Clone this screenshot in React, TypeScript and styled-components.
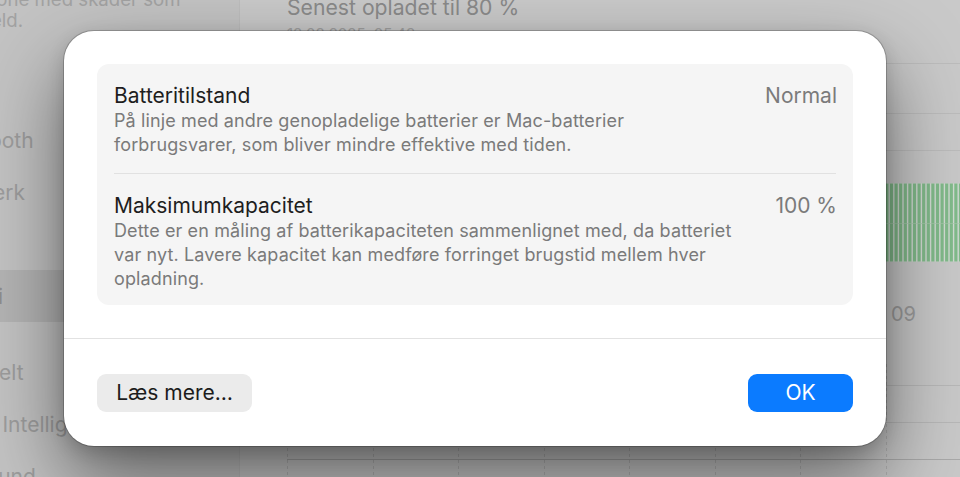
import React from "react";
import styled, { createGlobalStyle } from "styled-components";

const Global = createGlobalStyle`
  html, body { margin: 0; padding: 0; }
  body {
    width: 960px;
    height: 477px;
    overflow: hidden;
    font-family: Inter, "Noto Sans", sans-serif;
    -webkit-font-smoothing: antialiased;
  }
`;

const Screen = styled.div`
  position: relative;
  width: 960px;
  height: 477px;
  overflow: hidden;
  display: grid;
  grid-template-columns: 240px 1fr;
  background: #c9c9c9;
`;

/* ---------- sidebar (dimmed, behind sheet) ---------- */

const Sidebar = styled.aside`
  background: #c3c3c3;
  border-right: 1px solid #bdbdbd;
  overflow: hidden;
`;

const Notice = styled.p`
  margin: -11px 0 0 -31px;
  font-size: 18.6px;
  line-height: 21px;
  color: #a2a2a2;
  white-space: nowrap;
`;

const Nav = styled.nav`
  display: flex;
  flex-direction: column;
  margin: 31px 10px 0 -61px;
`;

const NavItem = styled.div<{ $active?: boolean; $section?: boolean }>`
  height: 52px;
  display: flex;
  align-items: center;
  margin-top: ${(p) => (p.$section ? "24px" : "0")};
  border-radius: 10px;
  background: ${(p) => (p.$active ? "#b4b4b4" : "transparent")};
  font-size: 21px;
  color: ${(p) => (p.$active ? "#8e8e8e" : "#9d9d9d")};
  white-space: nowrap;
`;

/* ---------- main (dimmed, behind sheet) ---------- */

const Main = styled.main`
  padding-left: 47px;
  overflow: hidden;
  display: flex;
  flex-direction: column;
`;

const Header = styled.header`
  margin-top: -5px;
  display: flex;
  flex-direction: column;
`;

const HeaderTitle = styled.div`
  font-size: 21.2px;
  line-height: 24px;
  color: #8a8a8a;
  white-space: nowrap;
`;

const HeaderDate = styled.div`
  margin-top: 5px;
  font-size: 15px;
  line-height: 20px;
  color: #a0a0a0;
`;

const Plot = styled.svg`
  display: block;
  flex-shrink: 0;
`;

const AxisRow = styled.div`
  margin-top: 30px;
  display: grid;
  grid-template-columns: repeat(9, 85.57px);
  height: 20px;
`;

const AxisLabel = styled.span`
  padding-left: 5px;
  font-size: 20px;
  line-height: 20px;
  color: #9c9c9c;
`;

/* ---------- sheet ---------- */

const Sheet = styled.div`
  position: absolute;
  left: 64px;
  top: 31px;
  width: 822px;
  height: 415px;
  box-sizing: border-box;
  background: #ffffff;
  border-radius: 30px;
  display: flex;
  flex-direction: column;
  box-shadow: 0 0 0 1px rgba(0, 0, 0, 0.2), 0 36px 80px rgba(0, 0, 0, 0.5),
    0 6px 18px rgba(0, 0, 0, 0.16);
`;

const SheetBody = styled.div`
  padding: 33px 33px 33px;
  border-bottom: 1px solid #e2e2e2;
`;

const Card = styled.section`
  background: #f5f5f5;
  border-radius: 12px;
  padding: 0 17px;
`;

const Row = styled.div`
  display: grid;
  grid-template-columns: 1fr auto;
  column-gap: 20px;
  padding: 20px 0 16px;
  & + & {
    border-top: 1px solid #e1e1e1;
  }
  &:last-child {
    padding-bottom: 14px;
  }
`;

const RowTitle = styled.div`
  font-size: 21px;
  line-height: 24px;
  color: #1e1e1e;
`;

const RowValue = styled.div`
  font-size: 21px;
  line-height: 24px;
  color: #7b7b7b;
  text-align: right;
  margin-right: -1px;
`;

const RowDesc = styled.div`
  grid-column: 1 / 2;
  margin-top: 1px;
  font-size: 18px;
  letter-spacing: 0.12px;
  line-height: 24px;
  color: #7a7a7a;
  white-space: nowrap;
`;

const Footer = styled.div`
  padding: 35px 33px;
  display: flex;
  justify-content: space-between;
  align-items: center;
`;

const Button = styled.button<{ $primary?: boolean }>`
  height: 38px;
  width: ${(p) => (p.$primary ? "105px" : "155px")};
  border: none;
  border-radius: 9px;
  background: ${(p) => (p.$primary ? "#0b7bff" : "#ebebeb")};
  color: ${(p) => (p.$primary ? "#ffffff" : "#1c1c1c")};
  font-family: inherit;
  font-size: 21px;
  line-height: 24px;
  padding: 0;
  cursor: default;
`;

/* ---------- data ---------- */

const sideItems = [
  { label: "Wi-Fi" },
  { label: "Bluetooth" },
  { label: "Netværk" },
  { label: "VPN" },
  { label: "Batteri", active: true },
  { label: "Generelt", section: true },
  { label: "Apple Intelligence & Siri" },
  { label: "Baggrund" },
];

const hours = ["12", "15", "18", "21", "00", "03", "06", "09", ""];

const rows = [
  {
    title: "Batteritilstand",
    value: "Normal",
    lines: [
      "På linje med andre genopladelige batterier er Mac-batterier",
      "forbrugsvarer, som bliver mindre effektive med tiden.",
    ],
  },
  {
    title: "Maksimumkapacitet",
    value: "100 %",
    lines: [
      "Dette er en måling af batterikapaciteten sammenlignet med, da batteriet",
      "var nyt. Lavere kapacitet kan medføre forringet brugstid mellem hver",
      "opladning.",
    ],
  },
];

const COL = 85.57;
const PLOT_W = 720;

function BatteryPlot() {
  const bars = [];
  const period = 4.6;
  for (let i = 0; i * period < PLOT_W; i++) {
    const x = i * period;
    bars.push(<rect key={i} x={x + 0.3} y={139.5} width={3.2} height={78} fill="#82bb8b" />);
  }
  return (
    <Plot width={PLOT_W} height={230} viewBox={`0 0 ${PLOT_W} 230`}>
      <rect x={0} y={139.5} width={PLOT_W} height={78} fill="#d3dbd4" />
      {bars}
      <line x1={0} x2={PLOT_W} y1={19.5} y2={19.5} stroke="#bcbcbc" />
      <line x1={0} x2={PLOT_W} y1={69.5} y2={69.5} stroke="#bcbcbc" />
      <line x1={0} x2={PLOT_W} y1={106.5} y2={106.5} stroke="#bcbcbc" />
      <line x1={0} x2={PLOT_W} y1={179.5} y2={179.5} stroke="#a8c8ad" strokeOpacity={0.6} />
    </Plot>
  );
}

function UsagePlot() {
  const verticals = [];
  for (let k = 0; k < 9; k++) {
    const x = Math.round(k * COL) + 0.5;
    verticals.push(
      <line key={k} x1={x} x2={x} y1={40} y2={160} stroke="#a9a9a9" strokeOpacity={0.7} strokeDasharray="3 3" />
    );
  }
  return (
    <Plot width={PLOT_W} height={160} viewBox={`0 0 ${PLOT_W} 160`}>
      <line x1={0} x2={PLOT_W} y1={61.5} y2={61.5} stroke="#b8b8b8" />
      <line x1={0} x2={PLOT_W} y1={98.5} y2={98.5} stroke="#b8b8b8" />
      <line x1={0} x2={PLOT_W} y1={135.5} y2={135.5} stroke="#a9a9a9" />
      {verticals}
    </Plot>
  );
}

export default function App() {
  return (
    <>
      <Global />
      <Screen>
        <Sidebar>
          <Notice>
            iPhone med skader som
            <br />
            uheld.
          </Notice>
          <Nav>
            {sideItems.map((it) => (
              <NavItem key={it.label} $active={it.active} $section={it.section}>
                {it.label}
              </NavItem>
            ))}
          </Nav>
        </Sidebar>

        <Main>
          <Header>
            <HeaderTitle>Senest opladet til 80 %</HeaderTitle>
            <HeaderDate>18.08.2025, 05.43</HeaderDate>
          </Header>
          <BatteryPlot />
          <AxisRow>
            {hours.map((h, i) => (
              <AxisLabel key={i}>{h}</AxisLabel>
            ))}
          </AxisRow>
          <UsagePlot />
        </Main>

        <Sheet role="dialog">
          <SheetBody>
            <Card>
              {rows.map((r) => (
                <Row key={r.title}>
                  <RowTitle>{r.title}</RowTitle>
                  <RowValue>{r.value}</RowValue>
                  <RowDesc>
                    {r.lines.map((l, i) => (
                      <React.Fragment key={i}>
                        {i > 0 && <br />}
                        {l}
                      </React.Fragment>
                    ))}
                  </RowDesc>
                </Row>
              ))}
            </Card>
          </SheetBody>
          <Footer>
            <Button>Læs mere…</Button>
            <Button $primary>OK</Button>
          </Footer>
        </Sheet>
      </Screen>
    </>
  );
}
